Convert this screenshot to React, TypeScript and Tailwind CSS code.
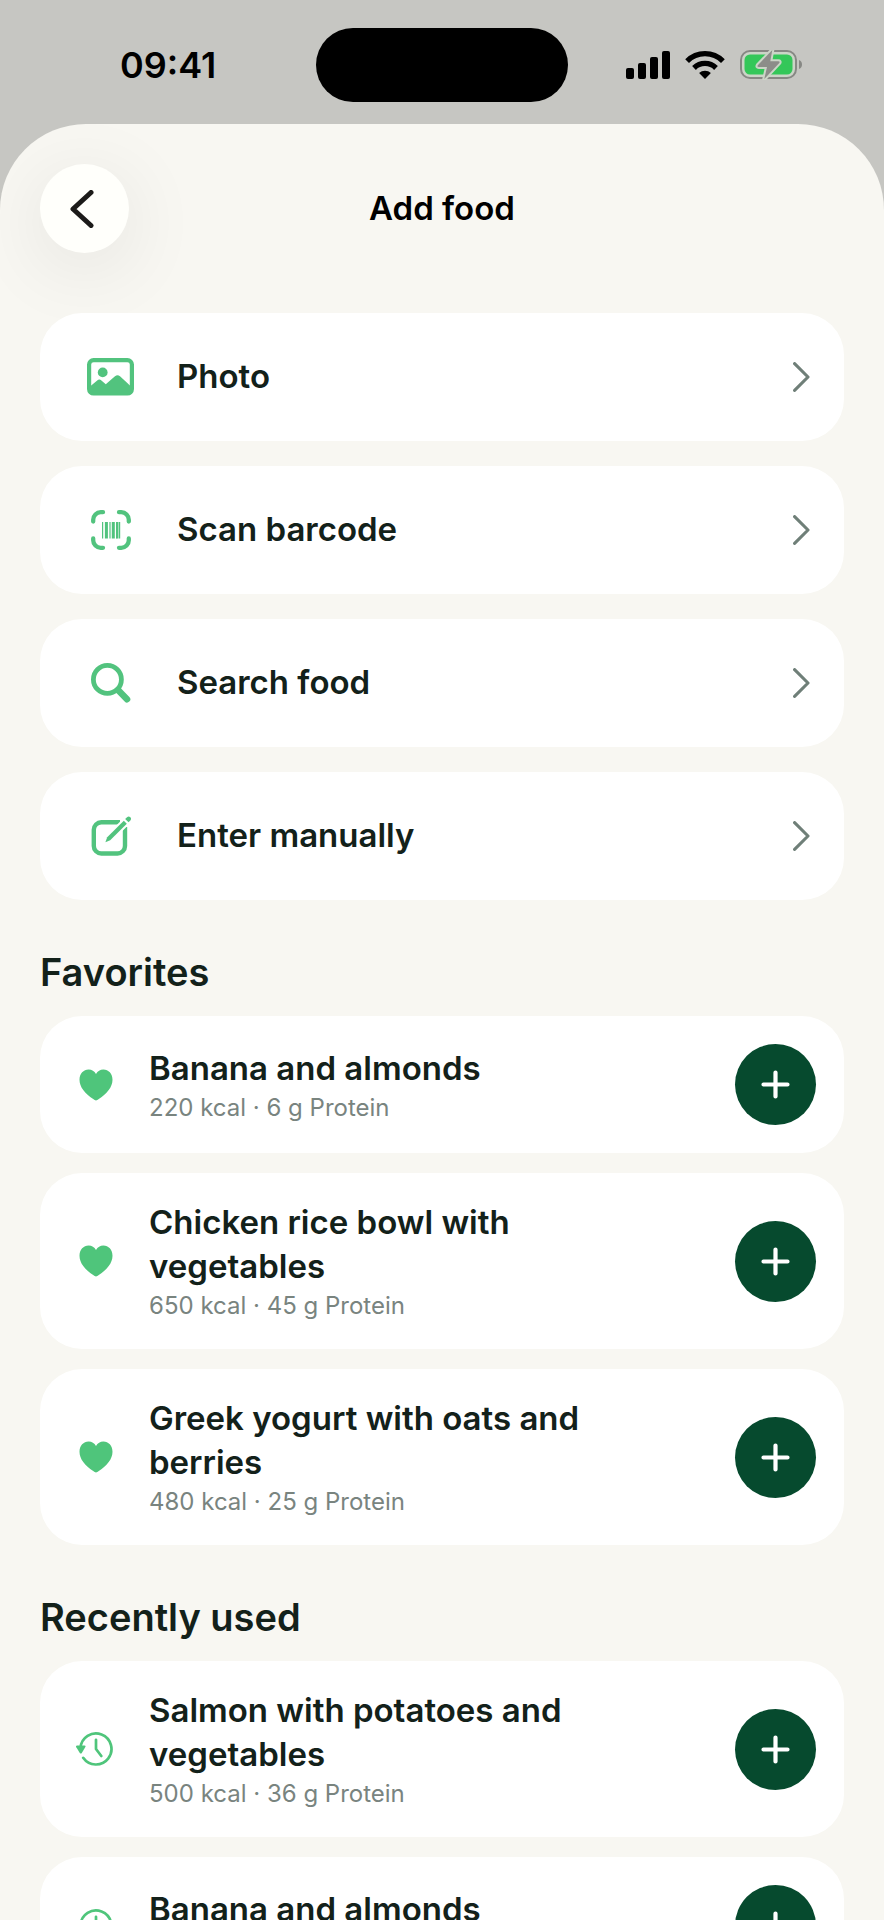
import { useState } from 'react';
import type { ReactNode } from 'react';

type Food = {
  name: string;
  kcal: number;
  protein: number;
};

const FAVORITES: Food[] = [
  { name: 'Banana and almonds', kcal: 220, protein: 6 },
  { name: 'Chicken rice bowl with vegetables', kcal: 650, protein: 45 },
  { name: 'Greek yogurt with oats and berries', kcal: 480, protein: 25 },
];

const RECENT: Food[] = [
  { name: 'Salmon with potatoes and vegetables', kcal: 500, protein: 36 },
  { name: 'Banana and almonds', kcal: 220, protein: 6 },
];

function SignalIcon() {
  return (
    <svg width="44" height="28" viewBox="0 0 44 28" aria-hidden="true">
      <rect x="0" y="17" width="8" height="11" rx="2" />
      <rect x="12" y="12" width="8" height="16" rx="2" />
      <rect x="24" y="6" width="8" height="22" rx="2" />
      <rect x="36" y="0" width="8" height="28" rx="2" />
    </svg>
  );
}

function WifiIcon() {
  return (
    <svg width="40" height="28" viewBox="0 0 40 28" aria-hidden="true">
      <path d="M2.1 10.1A25.3 25.3 0 0 1 37.9 10.1" fill="none" stroke="black" strokeWidth="5.3" />
      <path d="M9 17A15.6 15.6 0 0 1 31 17" fill="none" stroke="black" strokeWidth="5.3" />
      <path d="M20 28L14.1 22.1A8.3 8.3 0 0 1 25.9 22.1Z" />
    </svg>
  );
}

function BatteryIcon() {
  return (
    <svg width="62" height="30" viewBox="0 0 62 30" aria-hidden="true">
      <rect x="1" y="1" width="55" height="27" rx="9" fill="#cbd4c7" stroke="#878884" strokeWidth="2" />
      <rect x="4.5" y="4.5" width="48" height="20" rx="5.5" fill="#34c759" />
      <path d="M59 10C61 10.5 62 12.5 62 14.5S61 18.5 59 19Z" fill="#878884" />
      <path
        d="M32.3 0L17.8 15.2Q16.8 17 18.8 17H27L24.3 29L39.3 13Q40.3 11.2 38.3 11.2H30.3Z"
        fill="#8c8d89"
        stroke="#cbd4c7"
        strokeWidth="4"
        strokeLinejoin="round"
        paintOrder="stroke"
      />
    </svg>
  );
}

function PhotoIcon() {
  return (
    <svg width="48" height="38" viewBox="0 0 48 38" aria-hidden="true">
      <rect x="2.1" y="2.1" width="42.8" height="33.4" rx="4.5" fill="none" stroke="currentColor" strokeWidth="4.2" />
      <circle cx="15.7" cy="14.4" r="4.9" fill="currentColor" />
      <path
        d="M3 28.5L10.2 22.4Q12.3 20.8 14.4 22.4L18.8 26.2L28 18.2Q30.5 16.2 33 18.2L44 28.5V35H3Z"
        fill="currentColor"
      />
    </svg>
  );
}

function BarcodeIcon() {
  return (
    <svg width="40" height="40" viewBox="0 0 40 40" aria-hidden="true">
      <path
        d="M2.2 11.5V9.7A7.5 7.5 0 0 1 9.7 2.2H12M28 2.2H30.3A7.5 7.5 0 0 1 37.8 9.7V11.5M37.8 28.5V30.3A7.5 7.5 0 0 1 30.3 37.8H28M12 37.8H9.7A7.5 7.5 0 0 1 2.2 30.3V28.5"
        fill="none"
        stroke="currentColor"
        strokeWidth="4.3"
        strokeLinecap="round"
      />
      <path
        d="M11.6 12V28.5M19 12V28.5M25.6 12V28.5M28.6 12V28.5"
        fill="none"
        stroke="currentColor"
        strokeWidth="1.2"
      />
      <path d="M15.4 12V28.5M22.3 12V28.5" fill="none" stroke="currentColor" strokeWidth="3" />
      <path d="M26.5 12V28.5" fill="none" stroke="currentColor" strokeWidth="2" />
    </svg>
  );
}

function SearchIcon() {
  return (
    <svg width="40" height="40" viewBox="0 0 40 40" fill="none" stroke="currentColor" aria-hidden="true">
      <circle cx="16.4" cy="16.4" r="14" strokeWidth="4.8" />
      <path d="M27.5 27.5L36 36.2" strokeWidth="6.6" strokeLinecap="round" />
    </svg>
  );
}

function EditIcon() {
  return (
    <svg width="40" height="40" viewBox="0 0 40 40" aria-hidden="true">
      <path
        d="M29 6.3H10.3A7.5 7.5 0 0 0 2.8 13.8V30A7.5 7.5 0 0 0 10.3 37.5H26.5A7.5 7.5 0 0 0 34 30V11"
        fill="none"
        stroke="currentColor"
        strokeWidth="4.4"
      />
      <path
        d="M14.4 26.2L16.2 21.2L32.8 4.7L35.8 7.7L19.2 24.2Z"
        fill="currentColor"
        stroke="white"
        strokeWidth="4"
        paintOrder="stroke"
      />
      <path d="M34.2 3L36 1.2Q37.8 -0.2 39.3 1.3T39.3 4.5L37.5 6.3Z" fill="currentColor" />
    </svg>
  );
}

function ChevronIcon() {
  return (
    <svg width="17" height="30" viewBox="0 0 17 30" aria-hidden="true">
      <path
        d="M1.6 1.6L15 15L1.6 28.4"
        fill="none"
        stroke="#6f7f78"
        strokeWidth="3.1"
        strokeLinecap="round"
        strokeLinejoin="round"
      />
    </svg>
  );
}

function HeartIcon() {
  return (
    <svg width="34" height="32" viewBox="0 0 34 32" aria-hidden="true">
      <path
        d="M17 31.5C16.2 31.5 15.2 30.8 14.2 30.1C6 24.5 0.5 18.2 0.5 10.8C0.5 4.8 4.5 0.6 9.6 0.6C12.9 0.6 15.4 2.2 17 5C18.6 2.2 21.1 0.6 24.4 0.6C29.5 0.6 33.5 4.8 33.5 10.8C33.5 18.2 28 24.5 19.8 30.1C18.8 30.8 17.8 31.5 17 31.5Z"
        fill="currentColor"
      />
    </svg>
  );
}

function HistoryIcon() {
  return (
    <svg width="40" height="36" viewBox="0 0 40 36" aria-hidden="true">
      <path
        d="M4.5 17A15.5 15.5 0 1 1 7.2 26.8M20 8.8V18L25.3 25"
        fill="none"
        stroke="currentColor"
        strokeWidth="2.7"
        strokeLinecap="round"
        strokeLinejoin="round"
      />
      <path d="M1 14.5H8.5Q10.2 14.5 9.2 16.2L5.8 21.9Q4.8 23.2 3.8 21.9L0.3 16.2Q-0.6 14.5 1 14.5Z" fill="currentColor" />
    </svg>
  );
}

function StatusBar() {
  return (
    <header className="grid h-[124px] shrink-0 grid-cols-[1fr_252px_1fr] pt-7 pb-[22px]">
      <div className="flex items-center pl-[120px] text-[36px] font-semibold text-black">09:41</div>
      <div className="rounded-full bg-black" />
      <div className="flex items-center justify-end gap-[15px] pr-[82px]">
        <SignalIcon />
        <WifiIcon />
        <BatteryIcon />
      </div>
    </header>
  );
}

function MenuRow({ icon, label }: { icon: ReactNode; label: string }) {
  return (
    <button
      type="button"
      className="flex h-32 w-full items-center gap-9 rounded-[42px] bg-white pr-[34px] pl-[41px] text-left"
    >
      <span className="flex w-15 shrink-0 justify-center text-[#52c37e]">{icon}</span>
      <span className="flex-1 text-[33px] font-semibold">{label}</span>
      <ChevronIcon />
    </button>
  );
}

function FoodCard({ food, icon, onAdd }: { food: Food; icon: ReactNode; onAdd: () => void }) {
  return (
    <li className="flex min-h-[137px] items-center gap-[25px] rounded-[42px] bg-white px-7 py-[27px]">
      <span className="flex w-14 shrink-0 justify-center text-[#4fc57b]">{icon}</span>
      <div className="flex-1 pr-6">
        <h3 className="text-[33px] leading-[44px] font-semibold">{food.name}</h3>
        <p className="mt-0.5 text-[24px] leading-8 text-[#79847f]">
          {food.kcal} kcal · {food.protein} g Protein
        </p>
      </div>
      <button
        type="button"
        aria-label={`Add ${food.name}`}
        onClick={onAdd}
        className="flex size-[81px] shrink-0 items-center justify-center rounded-full bg-[#064a2e]"
      >
        <svg width="29" height="29" viewBox="0 0 29 29" aria-hidden="true">
          <path d="M14.5 2.5V26.5M2.5 14.5H26.5" stroke="white" strokeWidth="4.2" strokeLinecap="round" />
        </svg>
      </button>
    </li>
  );
}

function FoodSection({
  title,
  foods,
  icon,
  onAdd,
}: {
  title: string;
  foods: Food[];
  icon: ReactNode;
  onAdd: (food: Food) => void;
}) {
  return (
    <section className="mt-12">
      <h2 className="text-[38px] leading-[48px] font-semibold">{title}</h2>
      <ul className="mt-5 flex flex-col gap-5">
        {foods.map((food) => (
          <FoodCard key={food.name} food={food} icon={icon} onAdd={() => onAdd(food)} />
        ))}
      </ul>
    </section>
  );
}

export default function App() {
  const [, setAdded] = useState<Food[]>([]);

  function addFood(food: Food) {
    setAdded((prev) => [...prev, food]);
  }

  return (
    <div className="flex h-screen flex-col bg-[#c6c6c2] font-['Inter','Liberation_Sans',sans-serif] text-[#13211a]">
      <StatusBar />

      <main className="flex-1 overflow-y-auto rounded-t-[86px] bg-[#f8f7f2] px-10 pt-10 pb-12 [scrollbar-width:none]">
        <div className="grid grid-cols-[89px_1fr_89px] items-center">
          <button
            type="button"
            aria-label="Back"
            className="flex size-[89px] items-center justify-center rounded-full bg-[#fffffb] pr-1.5 shadow-[0_14px_80px_rgba(0,0,0,0.09)]"
          >
            <svg width="24" height="38" viewBox="0 0 24 38" aria-hidden="true">
              <path
                d="M21 2.5L3 19L21 35.5"
                fill="none"
                stroke="#1c1b19"
                strokeWidth="5"
                strokeLinecap="round"
                strokeLinejoin="round"
              />
            </svg>
          </button>
          <h1 className="text-center text-[33px] font-semibold text-black">Add food</h1>
        </div>

        <nav className="mt-15 flex flex-col gap-[25px]">
          <MenuRow icon={<PhotoIcon />} label="Photo" />
          <MenuRow icon={<BarcodeIcon />} label="Scan barcode" />
          <MenuRow icon={<SearchIcon />} label="Search food" />
          <MenuRow icon={<EditIcon />} label="Enter manually" />
        </nav>

        <FoodSection title="Favorites" foods={FAVORITES} icon={<HeartIcon />} onAdd={addFood} />
        <FoodSection title="Recently used" foods={RECENT} icon={<HistoryIcon />} onAdd={addFood} />
      </main>
    </div>
  );
}
